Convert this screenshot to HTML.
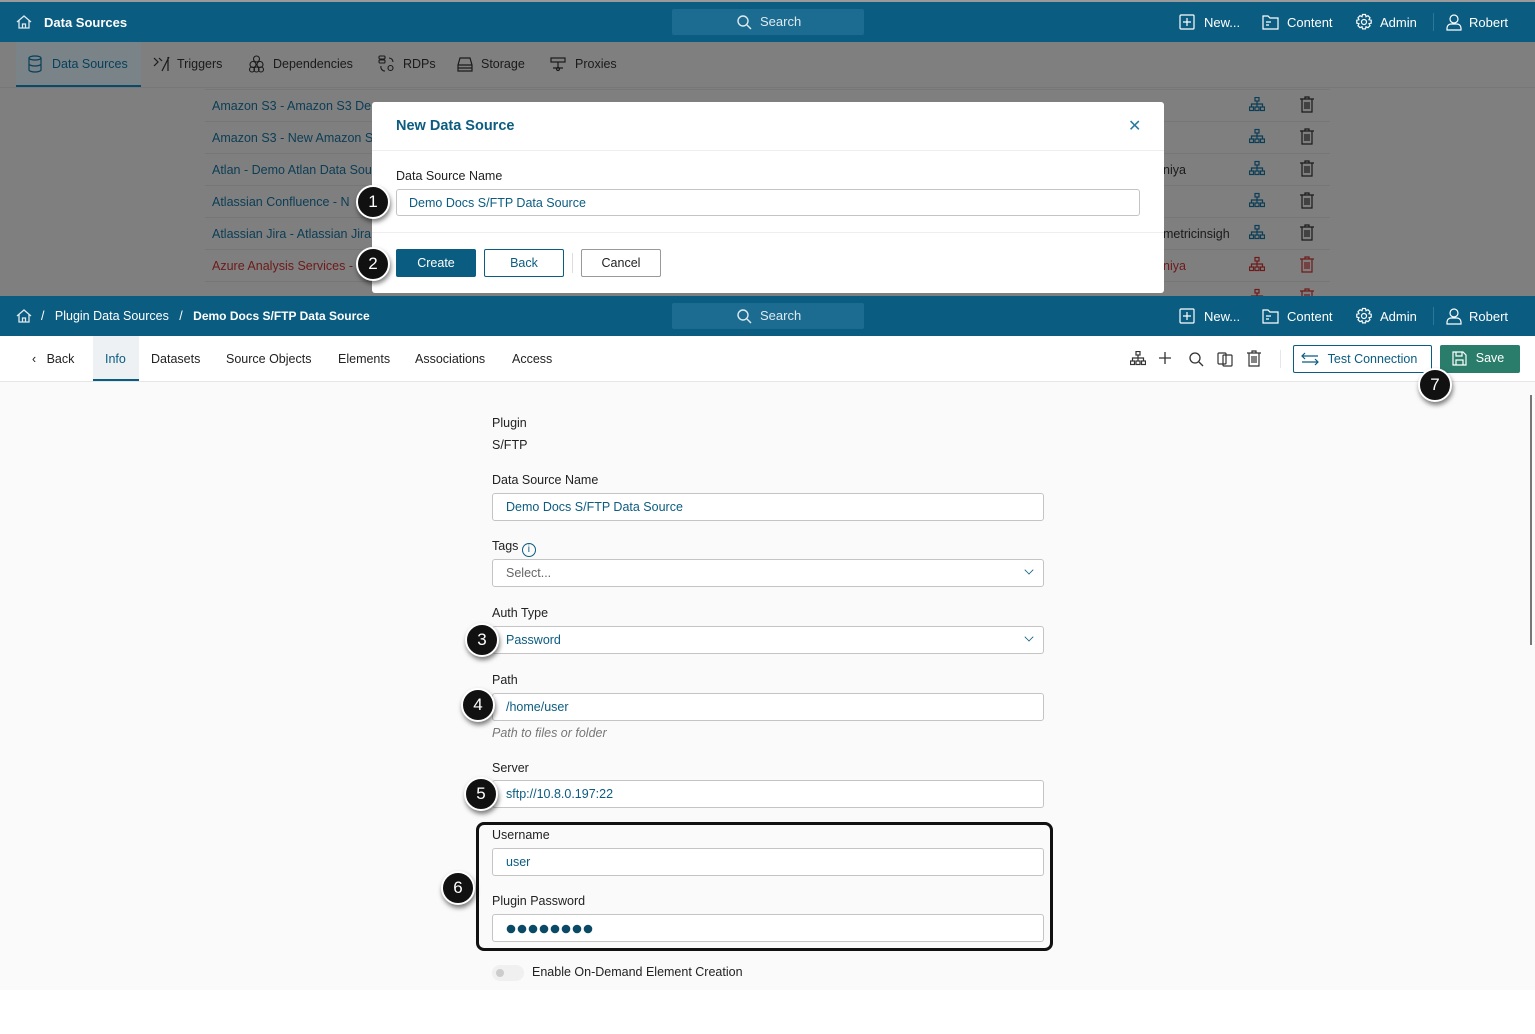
<!DOCTYPE html>
<html><head><meta charset="utf-8"><style>
*{box-sizing:border-box;margin:0;padding:0}
body{width:1535px;height:1034px;position:relative;overflow:hidden;font-family:"Liberation Sans",sans-serif;font-size:13px;color:#222;background:#fff}
.a{position:absolute}
.hdr{background:#0a5c80;color:#fff;height:40px;left:0;width:1535px}
.hdr .t{position:absolute;top:13px;font-size:13px;white-space:nowrap}
.srch{position:absolute;left:672px;top:8px;width:192px;height:26px;background:#1b6c90;border-radius:2px;color:#dfe9ef;font-size:13px;padding:5px 0 0 88px}
.dim{color:#063f5a}
.row{position:absolute;left:205px;width:1125px;height:32px;border-bottom:1px solid #767676;font-size:12.5px;color:#0b3d55}
.row span{position:absolute;left:7px;top:9px;white-space:nowrap}
.circ{position:absolute;width:34px;height:34px;border-radius:50%;background:#111;border:2px solid #fff;color:#fff;font-size:17px;text-align:center;line-height:30px;box-shadow:1px 3px 5px rgba(0,0,0,.5);z-index:5}
.lbl{position:absolute;left:492px;font-size:12.5px;color:#222}
.inp{position:absolute;left:492px;width:552px;height:28px;border:1px solid #c4c4c4;border-radius:3px;background:#fff;font-size:12.5px;color:#0b5c80;padding:6px 0 0 13px}
.chev{position:absolute;right:10px;top:6px;width:8px;height:8px;border-right:1.5px solid #0b5c80;border-bottom:1.5px solid #0b5c80;transform:rotate(45deg) scale(.8)}
.tab{position:absolute;top:352px;font-size:12.5px;color:#222}
.btn{position:absolute;height:28px;border-radius:2px;font-size:12.5px;text-align:center;line-height:26px}
</style></head><body>
<svg width="0" height="0" style="position:absolute"><defs>
<g id="hier" fill="none" stroke-width="1.2"><rect x="6" y="0.5" width="4" height="3.5"/><path d="M8 4v3M2.5 10V7h11v3M8 7v3"/><rect x="0.5" y="10" width="4" height="3.5"/><rect x="6" y="10" width="4" height="3.5"/><rect x="11.5" y="10" width="4" height="3.5"/></g>
<g id="trash" fill="none" stroke-width="1.2"><path d="M1 3h14M6 3V1h4v2M3 3v13h10V3M6 6v7M8 6v7M10 6v7"/></g>
</defs></svg>
<!-- top header -->
<div class="a" style="left:0;top:0;width:1535px;height:2px;background:#9a9a9a"></div>
<div class="a hdr" style="top:2px">
 <svg class="a" style="left:16px;top:12px" width="16" height="16" viewBox="0 0 16 16" fill="none" stroke="#dfe9ef" stroke-width="1.3"><path d="M1 8L8 2l7 6M3 6.5V14h10V6.5M6.5 14V10h3v4"/></svg>
 <div class="t" style="left:44px;font-weight:bold">Data Sources</div>
 <div class="srch" style="left:672px;top:7px"><svg class="a" style="left:64px;top:5px" width="16" height="16" viewBox="0 0 16 16" fill="none" stroke="#dfe9ef" stroke-width="1.4"><circle cx="7" cy="7" r="5"/><path d="M11 11l4 4"/></svg>Search</div>
 <svg class="a" style="left:1179px;top:12px" width="16" height="16" viewBox="0 0 16 16" fill="none" stroke="#fff" stroke-width="1.2"><rect x="1" y="1" width="14" height="14" rx="1"/><path d="M8 4v8M4 8h8"/></svg>
 <div class="t" style="left:1204px">New...</div>
 <svg class="a" style="left:1262px;top:12px" width="17" height="16" viewBox="0 0 17 16" fill="none" stroke="#fff" stroke-width="1.2"><path d="M1 2h5l2 2h8v11H1zM4 8h5M4 11h3"/></svg>
 <div class="t" style="left:1287px">Content</div>
 <svg class="a" style="left:1355px;top:11px" width="18" height="18" viewBox="0 0 18 18" fill="none" stroke="#fff" stroke-width="1.2"><circle cx="9" cy="9" r="2.5"/><path d="M7.5 1.5h3l.5 2.2 2-1 2 2-1 2 2.2.5v3l-2.2.5 1 2-2 2-2-1-.5 2.2h-3l-.5-2.2-2 1-2-2 1-2-2.2-.5v-3l2.2-.5-1-2 2-2 2 1z"/></svg>
 <div class="t" style="left:1380px">Admin</div>
 <div class="a" style="left:1433px;top:11px;width:1px;height:18px;background:#2d7799"></div>
 <svg class="a" style="left:1446px;top:11px" width="16" height="18" viewBox="0 0 16 18" fill="none" stroke="#fff" stroke-width="1.2"><circle cx="8" cy="6" r="4"/><path d="M1 17v-2a4 4 0 0 1 4-4h6a4 4 0 0 1 4 4v2z"/></svg>
 <div class="t" style="left:1469px">Robert</div>
</div>
<!-- dimmed area -->
<div class="a" style="left:0;top:42px;width:1535px;height:254px;background:#7f7f7f"></div>
<div class="a" style="left:0;top:87px;width:1535px;height:1px;background:#777"></div>
<div class="a" style="left:16px;top:42px;width:125px;height:45px;background:#7a8388;border-bottom:2px solid #0a4a66"></div>
<div class="a" style="top:57px;left:0;width:700px;font-size:12.5px;color:#1a1a1a">
 <svg class="a" style="left:28px;top:-2px" width="14" height="18" viewBox="0 0 14 18" fill="none" stroke="#063f5a" stroke-width="1.2"><ellipse cx="7" cy="3" rx="6" ry="2"/><path d="M1 3v12c0 1 3 2 6 2s6-1 6-2V3M1 9c0 1 3 2 6 2s6-1 6-2"/></svg>
 <span class="a dim" style="left:52px">Data Sources</span>
 <svg class="a" style="left:153px;top:-1px" width="17" height="16" viewBox="0 0 17 16" fill="none" stroke="#1a1a1a" stroke-width="1.2"><path d="M1 2l4 4-4 4M6 2l3 3M16 1L9 15M15 1v14"/></svg><span class="a" style="left:177px">Triggers</span>
 <svg class="a" style="left:248px;top:-2px" width="17" height="18" viewBox="0 0 17 18" fill="none" stroke="#1a1a1a" stroke-width="1.1"><circle cx="8.5" cy="4" r="3"/><circle cx="5" cy="9.5" r="3"/><circle cx="12" cy="9.5" r="3"/><circle cx="4" cy="14.5" r="2.5"/><circle cx="8.5" cy="14.5" r="2.5"/><circle cx="13" cy="14.5" r="2.5"/></svg><span class="a" style="left:273px">Dependencies</span>
 <svg class="a" style="left:378px;top:-2px" width="17" height="18" viewBox="0 0 17 18" fill="none" stroke="#1a1a1a" stroke-width="1.1"><rect x="1" y="1" width="6" height="3" rx="1"/><rect x="1" y="5" width="6" height="3" rx="1"/><path d="M11 3a4 4 0 0 1 4 4M3 11a4 4 0 0 0 4 5"/><circle cx="12.5" cy="13" r="2.5"/></svg><span class="a" style="left:403px">RDPs</span>
 <svg class="a" style="left:457px;top:0" width="16" height="15" viewBox="0 0 16 15" fill="none" stroke="#1a1a1a" stroke-width="1.2"><path d="M3 1h10l2 7v6H1V8zM1 8h14M1 11h14"/></svg><span class="a" style="left:481px">Storage</span>
 <svg class="a" style="left:550px;top:0" width="16" height="15" viewBox="0 0 16 15" fill="none" stroke="#1a1a1a" stroke-width="1.2"><rect x="1" y="1" width="14" height="4"/><path d="M8 5v6M3 11h10"/><circle cx="8" cy="12" r="1.5"/></svg><span class="a" style="left:575px">Proxies</span>
</div>
<div class="a" style="left:205px;top:89px;width:1125px;height:1px;background:#777"></div>
<div class="row" style="top:90px"><span>Amazon S3 - Amazon S3 De</span></div>
<div class="row" style="top:122px"><span>Amazon S3 - New Amazon S</span></div>
<div class="row" style="top:154px"><span>Atlan - Demo Atlan Data Sou</span><span style="left:958px;color:#1a1a1a">niya</span></div>
<div class="row" style="top:186px"><span>Atlassian Confluence - N</span></div>
<div class="row" style="top:218px"><span>Atlassian Jira - Atlassian Jira</span><span style="left:958px;color:#1a1a1a">metricinsigh</span></div>
<div class="row" style="top:250px"><span style="color:#6e1a1a">Azure Analysis Services -</span><span style="left:958px;color:#6e1a1a">niya</span></div>
<div class="row" style="top:282px;border:0"></div>
<svg class="a" style="left:1249px;top:97px" width="16" height="200" stroke="#0b3d55"><use href="#hier"/><use href="#hier" y="32"/><use href="#hier" y="64"/><use href="#hier" y="96"/><use href="#hier" y="128"/><use href="#hier" y="160" stroke="#6e1a1a"/><use href="#hier" y="192" stroke="#6e1a1a"/></svg>
<svg class="a" style="left:1299px;top:96px" width="16" height="200" stroke="#1a1a1a"><use href="#trash"/><use href="#trash" y="32"/><use href="#trash" y="64"/><use href="#trash" y="96"/><use href="#trash" y="128"/><use href="#trash" y="160" stroke="#6e1a1a"/><use href="#trash" y="192" stroke="#6e1a1a"/></svg>
<!-- modal -->
<div class="a" style="left:372px;top:102px;width:792px;height:191px;background:#fff;border-radius:3px">
 <div class="a" style="left:24px;top:16px;font-size:14.5px;color:#0b5c80;font-weight:bold">New Data Source</div>
 <div class="a" style="left:756px;top:14px;font-size:16px;color:#2a7aa0">✕</div>
 <div class="a" style="left:0;top:48px;width:792px;height:1px;background:#eee"></div>
 <div class="a" style="left:24px;top:67px;font-size:12.5px">Data Source Name</div>
 <div class="a" style="left:24px;top:87px;width:744px;height:27px;border:1px solid #c4c4c4;border-radius:3px;font-size:12.5px;color:#0b5c80;padding:6px 0 0 12px">Demo Docs S/FTP Data Source</div>
 <div class="a" style="left:0;top:130px;width:792px;height:1px;background:#eee"></div>
 <div class="btn" style="left:24px;top:147px;width:80px;background:#0a5c80;color:#fff;border:1px solid #0a5c80">Create</div>
 <div class="btn" style="left:112px;top:147px;width:80px;border:1px solid #0a5c80;color:#0a5c80">Back</div>
 <div class="a" style="left:200px;top:151px;width:1px;height:20px;background:#ddd"></div>
 <div class="btn" style="left:209px;top:147px;width:80px;border:1px solid #999;color:#222">Cancel</div>
</div>
<div class="circ" style="left:356px;top:185px">1</div>
<div class="circ" style="left:356px;top:247px">2</div>
<!-- second header -->
<div class="a hdr" style="top:296px">
 <svg class="a" style="left:16px;top:12px" width="16" height="16" viewBox="0 0 16 16" fill="none" stroke="#dfe9ef" stroke-width="1.3"><path d="M1 8L8 2l7 6M3 6.5V14h10V6.5M6.5 14V10h3v4"/></svg>
 <div class="t" style="left:41px;font-size:12.5px">/ &nbsp;&nbsp;Plugin Data Sources &nbsp;&nbsp;/ &nbsp;&nbsp;<b style="font-size:12px">Demo Docs S/FTP Data Source</b></div>
 <div class="srch" style="top:7px"><svg class="a" style="left:64px;top:5px" width="16" height="16" viewBox="0 0 16 16" fill="none" stroke="#dfe9ef" stroke-width="1.4"><circle cx="7" cy="7" r="5"/><path d="M11 11l4 4"/></svg>Search</div>
 <svg class="a" style="left:1179px;top:12px" width="16" height="16" viewBox="0 0 16 16" fill="none" stroke="#fff" stroke-width="1.2"><rect x="1" y="1" width="14" height="14" rx="1"/><path d="M8 4v8M4 8h8"/></svg>
 <div class="t" style="left:1204px">New...</div>
 <svg class="a" style="left:1262px;top:12px" width="17" height="16" viewBox="0 0 17 16" fill="none" stroke="#fff" stroke-width="1.2"><path d="M1 2h5l2 2h8v11H1zM4 8h5M4 11h3"/></svg>
 <div class="t" style="left:1287px">Content</div>
 <svg class="a" style="left:1355px;top:11px" width="18" height="18" viewBox="0 0 18 18" fill="none" stroke="#fff" stroke-width="1.2"><circle cx="9" cy="9" r="2.5"/><path d="M7.5 1.5h3l.5 2.2 2-1 2 2-1 2 2.2.5v3l-2.2.5 1 2-2 2-2-1-.5 2.2h-3l-.5-2.2-2 1-2-2 1-2-2.2-.5v-3l2.2-.5-1-2 2-2 2 1z"/></svg>
 <div class="t" style="left:1380px">Admin</div>
 <div class="a" style="left:1433px;top:11px;width:1px;height:18px;background:#2d7799"></div>
 <svg class="a" style="left:1446px;top:11px" width="16" height="18" viewBox="0 0 16 18" fill="none" stroke="#fff" stroke-width="1.2"><circle cx="8" cy="6" r="4"/><path d="M1 17v-2a4 4 0 0 1 4-4h6a4 4 0 0 1 4 4v2z"/></svg>
 <div class="t" style="left:1469px">Robert</div>
</div>
<!-- tab bar -->
<div class="a" style="left:0;top:336px;width:1535px;height:46px;background:#fff;border-bottom:1px solid #e6e6e6"></div>
<div class="a" style="left:93px;top:336px;width:46px;height:45px;background:#edf1f4;border-bottom:2px solid #0a5c80"></div>
<div class="tab" style="left:32px">‹ &nbsp;&nbsp;Back</div>
<div class="tab" style="left:105px;color:#0a5c80">Info</div>
<div class="tab" style="left:151px">Datasets</div>
<div class="tab" style="left:226px">Source Objects</div>
<div class="tab" style="left:338px">Elements</div>
<div class="tab" style="left:415px">Associations</div>
<div class="tab" style="left:512px">Access</div>
<svg class="a" style="left:1130px;top:351px" width="16" height="16" stroke="#333"><use href="#hier"/></svg>
<svg class="a" style="left:1158px;top:351px" width="14" height="14" fill="none" stroke="#333" stroke-width="1.3"><path d="M7 1v12M1 7h12"/></svg>
<svg class="a" style="left:1188px;top:351px" width="16" height="16" viewBox="0 0 16 16" fill="none" stroke="#333" stroke-width="1.3"><circle cx="7" cy="7" r="5"/><path d="M11 11l4 4"/></svg>
<svg class="a" style="left:1217px;top:350px" width="17" height="17" viewBox="0 0 17 17" fill="none" stroke="#333" stroke-width="1.2"><rect x="1" y="3" width="8" height="11" rx="1"/><rect x="6" y="5" width="9" height="11" rx="1"/></svg>
<svg class="a" style="left:1246px;top:350px" width="16" height="17" stroke="#333"><use href="#trash"/></svg>
<div class="a" style="left:1280px;top:350px;width:1px;height:18px;background:#e6e6e6"></div>
<div class="btn" style="left:1293px;top:345px;width:139px;border:1px solid #0a5c80;color:#0a5c80;padding-left:20px">Test Connection</div>
<svg class="a" style="left:1301px;top:352px" width="18" height="14" fill="none" stroke="#0a5c80" stroke-width="1.2"><path d="M1 4h16M4 1L1 4l3 3M17 10H1M14 7l3 3-3 3"/></svg>
<div class="btn" style="left:1440px;top:345px;width:80px;background:#2a7d6b;color:#fff;padding-left:20px">Save</div>
<svg class="a" style="left:1452px;top:351px" width="15" height="15" viewBox="0 0 15 15" fill="none" stroke="#fff" stroke-width="1.2"><path d="M1 1h10l3 3v10H1zM4 1v4h6V1M4 14V9h7v5"/></svg>
<!-- content -->
<div class="a" style="left:0;top:382px;width:1535px;height:608px;background:#fafafa"></div>
<div class="circ" style="left:1418px;top:368px">7</div>
<div class="a" style="left:1530px;top:395px;width:2px;height:250px;background:#777"></div>
<div class="lbl" style="top:416px">Plugin</div>
<div class="lbl" style="top:438px">S/FTP</div>
<div class="lbl" style="top:473px">Data Source Name</div>
<div class="inp" style="top:493px">Demo Docs S/FTP Data Source</div>
<div class="lbl" style="top:539px">Tags <span style="display:inline-block;width:14px;height:14px;border:1px solid #0a5c80;border-radius:50%;color:#0a5c80;font-size:10px;text-align:center;line-height:12px;vertical-align:-2px">i</span></div>
<div class="inp" style="top:559px;color:#666">Select...<div class="chev"></div></div>
<div class="lbl" style="top:606px">Auth Type</div>
<div class="inp" style="top:626px">Password<div class="chev"></div></div>
<div class="circ" style="left:465px;top:623px">3</div>
<div class="lbl" style="top:673px">Path</div>
<div class="inp" style="top:693px">/home/user</div>
<div class="circ" style="left:461px;top:688px">4</div>
<div class="lbl" style="top:726px;color:#777;font-style:italic">Path to files or folder</div>
<div class="lbl" style="top:761px">Server</div>
<div class="inp" style="top:780px">sftp://10.8.0.197:22</div>
<div class="circ" style="left:464px;top:777px">5</div>
<div class="a" style="left:476px;top:822px;width:577px;height:129px;border:3px solid #111;border-radius:8px"></div>
<div class="lbl" style="top:828px">Username</div>
<div class="inp" style="top:848px">user</div>
<div class="lbl" style="top:894px">Plugin Password</div>
<div class="inp" style="top:914px;padding-top:8px"><svg width="90" height="10" fill="#0a4a66"><circle cx="5" cy="5" r="4.3"/><circle cx="16" cy="5" r="4.3"/><circle cx="27" cy="5" r="4.3"/><circle cx="38" cy="5" r="4.3"/><circle cx="49" cy="5" r="4.3"/><circle cx="60" cy="5" r="4.3"/><circle cx="71" cy="5" r="4.3"/><circle cx="82" cy="5" r="4.3"/></svg></div>
<div class="circ" style="left:441px;top:871px">6</div>
<div class="a" style="left:492px;top:965px;width:32px;height:16px;border-radius:8px;background:#f0f0f0"><div class="a" style="left:4px;top:4px;width:8px;height:8px;border-radius:50%;background:#ccc"></div></div>
<div class="lbl" style="left:532px;top:965px">Enable On-Demand Element Creation</div>
</body></html>
